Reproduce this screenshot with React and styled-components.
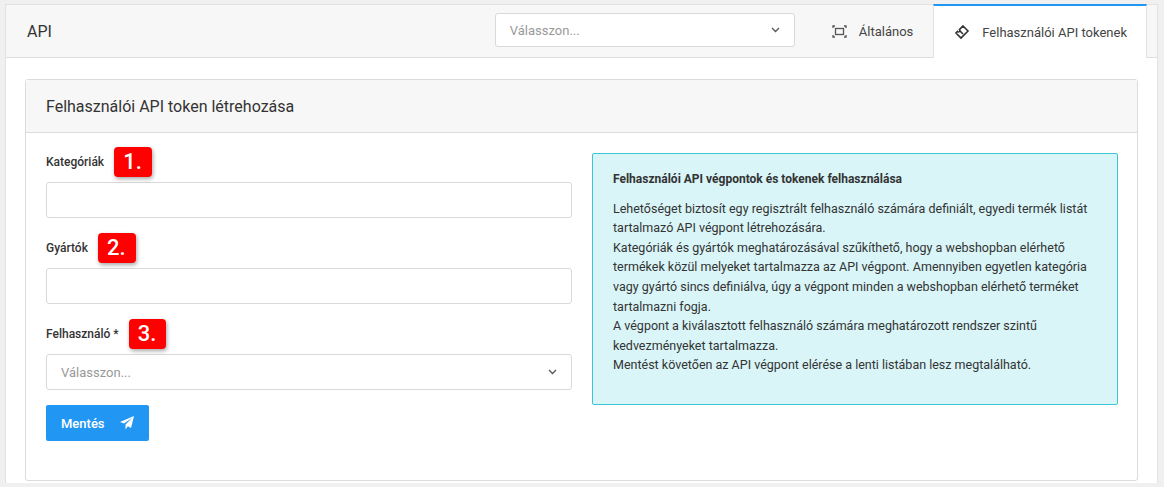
import React from "react";
import styled, { createGlobalStyle } from "styled-components";

const G = createGlobalStyle`
  body { margin:0; background:#f0f0f0; font-family: Roboto, "Liberation Sans", sans-serif; color:#333; }
`;
const Page = styled.div`padding:4px 6px 0 5px; height:483px; box-sizing:border-box;`;
const Frame = styled.div`background:#fff; border:1px solid #e2e2e2; border-bottom:none; height:100%; box-sizing:border-box; display:flex; flex-direction:column;`;
const Top = styled.div`height:52px; background:#f7f7f7; border-bottom:1px solid #dedede; display:flex; align-items:stretch;`;
const Title = styled.div`flex:1; display:flex; align-items:center; padding-left:21px; font-size:16px; color:#333;`;
const Sel = styled.div`width:300px; height:34px; margin-top:8px; box-sizing:border-box; border:1px solid #d9d9d9; border-radius:3px; background:#fff; display:flex; align-items:center; justify-content:space-between; padding:0 14px 0 14px; font-size:13px; color:#999; margin-right:${p=>p.$mr||0}px; ${p=>p.$full?"width:100%;margin-top:0;height:36px;":""}`;
const Tab = styled.div`display:flex; align-items:center; gap:12px; padding:0 ${p=>p.$active?19:20}px 0 ${p=>p.$active?20:32}px; font-size:13px; color:#444; ${p=>p.$active?"background:#fff; border-top:2px solid #2196f3; border-left:1px solid #e2e2e2; border-right:1px solid #e2e2e2; margin:-1px 10px -1px 0;":""}`;
const Body = styled.div`padding:21px 19px 0 19px;`;
const Card = styled.div`border:1px solid #dcdcdc; border-radius:3px; height:402px; box-sizing:border-box;`;
const CardHead = styled.div`height:52px; background:#f7f7f7; border-bottom:1px solid #dcdcdc; display:flex; align-items:center; padding-left:20px; font-size:16px; color:#333;`;
const CardBody = styled.div`display:grid; grid-template-columns:526px 526px; gap:20px; padding:14px 20px;`;
const Field = styled.div`margin-bottom:15px;`;
const Label = styled.div`display:flex; align-items:center; gap:10px; font-size:12px; font-weight:500; color:#333; height:30px; margin-bottom:5px;`;
const Badge = styled.span`background:#f00; color:#fff; font-size:22px; padding:1px 10px 1px 9px; border-radius:4px; box-shadow:1px 2px 4px rgba(0,0,0,.35); line-height:28px;`;
const Input = styled.div`height:36px; border:1px solid #d9d9d9; border-radius:3px; box-sizing:border-box;`;
const Btn = styled.button`margin-top:5px; background:#2196f3; color:#fff; border:none; border-radius:2px; height:36px; padding:0 14px 0 15px; font-family:inherit; font-size:13px; font-weight:500; display:flex; align-items:center; gap:14px;`;
const Info = styled.div`margin-top:6px; background:#d9f5f8; border:1px solid #3cc6d4; border-radius:2px; height:252px; box-sizing:border-box; padding:16px 20px; font-size:12.5px; color:#333; line-height:19.6px;`;
const InfoT = styled.div`font-weight:700; font-size:12px; margin-bottom:9px;`;

const Chev = () => <svg width="9" height="6" viewBox="0 0 9 6"><path d="M1 1l3.5 3.5L8 1" fill="none" stroke="#555" strokeWidth="1.3"/></svg>;

export default function App(){
  return <><G/><Page><Frame>
    <Top>
      <Title>API</Title>
      <Sel $mr={5}>Válasszon...<Chev/></Sel>
      <Tab>
        <svg width="15" height="13" viewBox="0 0 15 13" fill="none" stroke="#555" strokeWidth="1.3"><path d="M1 3V1h2M12 1h2v2M14 10v2h-2M3 12H1v-2"/><rect x="3.5" y="3.5" width="8" height="6"/></svg>
        Általános
      </Tab>
      <Tab $active>
        <svg width="16" height="16" viewBox="0 0 16 16" fill="none" stroke="#333" strokeWidth="1.6"><path d="M9 2l5 5-7 7-5-5 1.5-1.5a1.4 1.4 0 002-2z"/><path d="M6 7l3 3"/></svg>
        Felhasználói API tokenek
      </Tab>
    </Top>
    <Body><Card>
      <CardHead>Felhasználói API token létrehozása</CardHead>
      <CardBody>
        <div>
          <Field><Label>Kategóriák<Badge>1.</Badge></Label><Input/></Field>
          <Field><Label>Gyártók<Badge>2.</Badge></Label><Input/></Field>
          <Field><Label>Felhasználó *<Badge>3.</Badge></Label><Sel $full>Válasszon...<Chev/></Sel></Field>
          <Btn>Mentés<svg width="16" height="16" viewBox="0 0 16 16" fill="#fff"><path d="M15 1L1 7l4 1.6L13 3 6.5 9.5v5l2.4-3.2L12 13z"/></svg></Btn>
        </div>
        <Info>
          <InfoT>Felhasználói API végpontok és tokenek felhasználása</InfoT>
          Lehetőséget biztosít egy regisztrált felhasználó számára definiált, egyedi termék listát tartalmazó API végpont létrehozására.<br/>
          Kategóriák és gyártók meghatározásával szűkíthető, hogy a webshopban elérhető termékek közül melyeket tartalmazza az API végpont. Amennyiben egyetlen kategória vagy gyártó sincs definiálva, úgy a végpont minden a webshopban elérhető terméket tartalmazni fogja.<br/>
          A végpont a kiválasztott felhasználó számára meghatározott rendszer szintű kedvezményeket tartalmazza.<br/>
          Mentést követően az API végpont elérése a lenti listában lesz megtalálható.
        </Info>
      </CardBody>
    </Card></Body>
  </Frame></Page></>;
}
